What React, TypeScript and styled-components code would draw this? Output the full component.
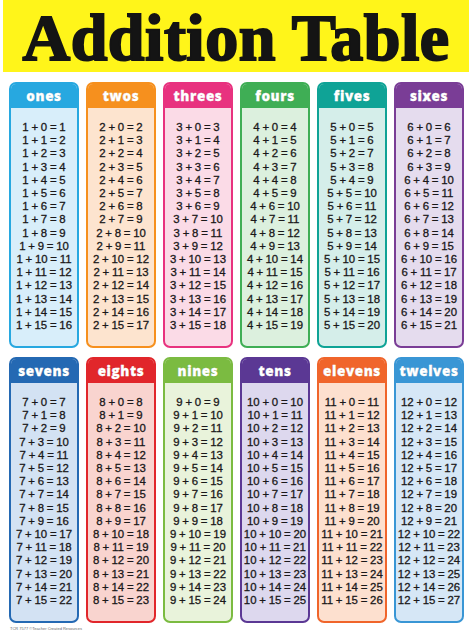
import styled, { createGlobalStyle } from 'styled-components'

const GlobalStyle = createGlobalStyle`
    html, body {
        margin: 0;
        padding: 0;
        background: #ffffff;
    }
`

interface Column {
    name: string
    n: number
    color: string
    tint: string
}

const columns: Column[] = [
    { name: 'ones', n: 1, color: '#27a8e0', tint: '#d8eefa' },
    { name: 'twos', n: 2, color: '#f6901e', tint: '#fde4cf' },
    { name: 'threes', n: 3, color: '#e8327f', tint: '#fbdbe7' },
    { name: 'fours', n: 4, color: '#3fae55', tint: '#dcf0de' },
    { name: 'fives', n: 5, color: '#0fa396', tint: '#d5eeea' },
    { name: 'sixes', n: 6, color: '#7a3d96', tint: '#e5dcee' },
    { name: 'sevens', n: 7, color: '#2469b3', tint: '#d3e2f3' },
    { name: 'eights', n: 8, color: '#e1262b', tint: '#f9d4cf' },
    { name: 'nines', n: 9, color: '#7bbb41', tint: '#e9f3db' },
    { name: 'tens', n: 10, color: '#5b3894', tint: '#ddd8ee' },
    { name: 'elevens', n: 11, color: '#f0652b', tint: '#fde0cf' },
    { name: 'twelves', n: 12, color: '#3996d5', tint: '#d6e7f6' },
]

const Page = styled.div`
    width: 474px;
    height: 632px;
    display: flex;
    flex-direction: column;
    overflow: hidden;
`

const Banner = styled.div`
    height: 72px;
    margin: 0 5px 0 3px;
    background: #fff51a;
    display: flex;
    align-items: center;
    justify-content: center;
`

const Title = styled.h1`
    margin: 0;
    font-family: 'Liberation Serif', 'DejaVu Serif', serif;
    font-weight: 700;
    font-size: 66px;
    line-height: 1;
    letter-spacing: 0.5px;
    color: #141414;
    -webkit-text-stroke: 2px #141414;
    white-space: nowrap;
    padding-top: 4px;
`

const Grid = styled.div`
    display: grid;
    grid-template-columns: repeat(6, 70px);
    grid-template-rows: 266px 266px;
    column-gap: 7px;
    row-gap: 9px;
    padding: 10px 0 0 9px;
`

const Card = styled.div<{ $color: string; $tint: string }>`
    display: flex;
    flex-direction: column;
    border: 2px solid ${(p) => p.$color};
    border-radius: 7px;
    background: ${(p) => p.$tint};
    overflow: hidden;
`

const Header = styled.div<{ $color: string }>`
    height: 24px;
    background: ${(p) => p.$color};
    display: flex;
    align-items: center;
    justify-content: center;
    font-family: 'Open Sans', 'DejaVu Sans', sans-serif;
    font-weight: 800;
    font-size: 13.5px;
    letter-spacing: 0.6px;
    color: #ffffff;
    -webkit-text-stroke: 0.3px #ffffff;
    text-shadow: 0 0 1px rgba(0, 0, 0, 0.25);
`

const Facts = styled.ul`
    list-style: none;
    margin: 0;
    padding: 13px 0 0;
    text-align: center;
    font-family: 'Liberation Sans', Arial, sans-serif;
    font-size: 11.4px;
    line-height: 13.2px;
    word-spacing: -0.4px;
    color: #1a1819;
    -webkit-text-stroke: 0.3px #1a1819;
`

const Fact = styled.li`
    white-space: nowrap;
`

const Footer = styled.div`
    padding: 3px 0 0 10px;
    font-family: 'Liberation Sans', sans-serif;
    font-size: 4px;
    line-height: 5px;
    color: #6a6a6a;
`

function TableCard({ col }: { col: Column }) {
    const rows = Array.from({ length: 16 }, (_, i) => i)
    return (
        <Card $color={col.color} $tint={col.tint}>
            <Header $color={col.color}>{col.name}</Header>
            <Facts>
                {rows.map((i) => (
                    <Fact key={i}>
                        {col.n} + {i} = {col.n + i}
                    </Fact>
                ))}
            </Facts>
        </Card>
    )
}

export default function App() {
    return (
        <Page>
            <GlobalStyle />
            <Banner>
                <Title>Addition Table</Title>
            </Banner>
            <Grid>
                {columns.map((col) => (
                    <TableCard key={col.name} col={col} />
                ))}
            </Grid>
            <Footer>TCR 7577 ©Teacher Created Resources</Footer>
        </Page>
    )
}
